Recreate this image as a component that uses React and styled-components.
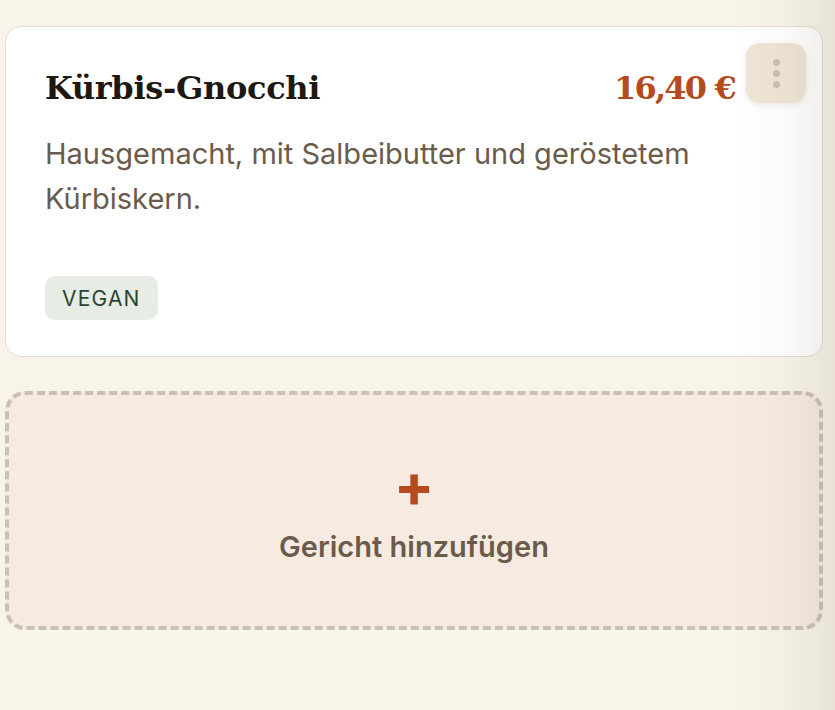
import React from "react";
import styled, { createGlobalStyle } from "styled-components";

const Global = createGlobalStyle`
  html, body { margin: 0; padding: 0; background: #f8f4ea; }
  body { font-family: Inter, "Noto Sans", sans-serif; }
`;

const Page = styled.div`
  position: relative;
  min-height: 710px;
  padding: 26px 12px 0 5px;
  box-sizing: border-box;
  display: flex;
  flex-direction: column;
  gap: 34px;
`;

const EdgeFade = styled.div`
  position: fixed;
  top: 0;
  right: 0;
  width: 100px;
  height: 100%;
  pointer-events: none;
  background: linear-gradient(to right, rgba(120, 100, 70, 0) 0%, rgba(120, 100, 70, 0.03) 50%, rgba(120, 100, 70, 0.12) 100%);
`;

const Card = styled.article`
  position: relative;
  background: #ffffff;
  border: 1.5px solid #e2ddd6;
  border-radius: 16px;
  padding: 37px 40px 36px 39px;
  display: flex;
  flex-direction: column;
  align-items: flex-start;
`;

const Header = styled.div`
  align-self: stretch;
  display: flex;
  justify-content: space-between;
  align-items: baseline;
  padding-right: 47px;
`;

const Title = styled.h2`
  margin: 0;
  font-family: "DejaVu Serif", "Liberation Serif", serif;
  font-weight: 700;
  font-size: 32px;
  line-height: 48px;
  letter-spacing: -0.3px;
  color: #1e1712;
`;

const Price = styled.span`
  font-family: "DejaVu Serif", "Liberation Serif", serif;
  font-weight: 700;
  font-size: 32px;
  line-height: 48px;
  letter-spacing: -1.8px;
  color: #b54a1f;
`;

const MenuButton = styled.button`
  position: absolute;
  top: 16px;
  right: 16px;
  width: 60px;
  height: 60px;
  border: none;
  border-radius: 14px;
  background: #efe5d5;
  box-shadow: 0 2px 6px rgba(120, 90, 50, 0.12);
  display: flex;
  flex-direction: column;
  align-items: center;
  justify-content: center;
  gap: 4px;
  padding: 0;
`;

const Dot = styled.span`
  width: 7px;
  height: 7px;
  border-radius: 50%;
  background: #cbbfaf;
`;

const Description = styled.p`
  margin: 19px 0 0;
  font-size: 29px;
  line-height: 45px;
  color: #6b5b4b;
  max-width: 720px;
`;

const Tag = styled.span`
  margin-top: 55px;
  display: inline-flex;
  align-items: center;
  height: 44px;
  padding: 0 17px;
  border-radius: 10px;
  background: #e7ede4;
  color: #2b4532;
  font-size: 21px;
  letter-spacing: 1.2px;
  text-transform: uppercase;
`;

const AddTile = styled.button`
  height: 239px;
  border: 4px dashed #cac1b6;
  border-radius: 20px;
  background: #f7ebe1;
  display: flex;
  flex-direction: column;
  align-items: center;
  justify-content: center;
  gap: 28px;
  padding: 12px 0 0;
  font-family: Inter, "Noto Sans", sans-serif;
  cursor: pointer;
`;

const Plus = styled.span`
  font-size: 60px;
  font-weight: 700;
  line-height: 32px;
  color: #b54a1f;
`;

const AddLabel = styled.span`
  font-size: 29px;
  line-height: 36px;
  font-weight: 600;
  color: #6b5b4b;
`;

export default function App() {
  return (
    <>
      <Global />
      <Page>
        <Card>
          <Header>
            <Title>Kürbis-Gnocchi</Title>
            <Price>16,40 €</Price>
          </Header>
          <MenuButton aria-label="Mehr">
            <Dot />
            <Dot />
            <Dot />
          </MenuButton>
          <Description>Hausgemacht, mit Salbeibutter und geröstetem Kürbiskern.</Description>
          <Tag>Vegan</Tag>
        </Card>
        <AddTile>
          <Plus>+</Plus>
          <AddLabel>Gericht hinzufügen</AddLabel>
        </AddTile>
        <EdgeFade />
      </Page>
    </>
  );
}
